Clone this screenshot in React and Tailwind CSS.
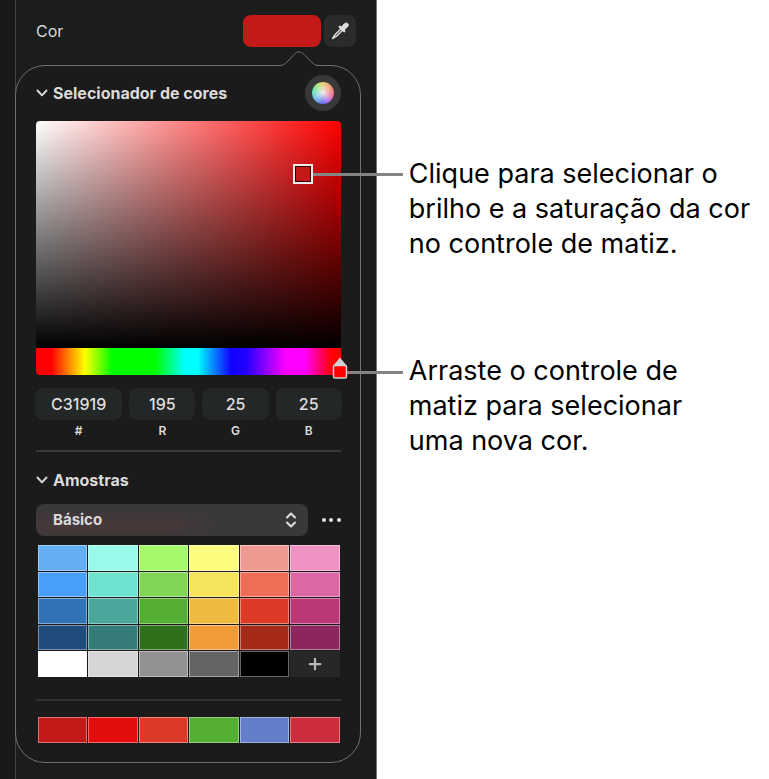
import clsx from 'clsx';
import { Plus } from 'lucide-react';

const swatches = [
  'bg-[#63adf2]', 'bg-[#9af9ea]', 'bg-[#a5f96b]', 'bg-[#fefc7e]', 'bg-[#ef9a91]', 'bg-[#ef94c2]',
  'bg-[#489ff8]', 'bg-[#6de2cf]', 'bg-[#82d557]', 'bg-[#f5e35b]', 'bg-[#ee6d57]', 'bg-[#dd66a4]',
  'bg-[#3273b5]', 'bg-[#4ba69b]', 'bg-[#54ae32]', 'bg-[#eebb40]', 'bg-[#da3a26]', 'bg-[#b93875]',
  'bg-[#1f4c7c]', 'bg-[#357b77]', 'bg-[#2f701d]', 'bg-[#f19b38]', 'bg-[#a52a1a]', 'bg-[#8c265e]',
  'bg-white', 'bg-[#d5d5d5]', 'bg-[#929292]', 'bg-[#646464]', 'bg-black',
];

const recents = [
  'bg-[#c31919]', 'bg-[#e40d0d]', 'bg-[#da3a26]', 'bg-[#54ae32]', 'bg-[#647fca]', 'bg-[#cb2d3c]',
];

const channels = [
  { id: 'hex', label: '#', value: 'C31919', grow: 'flex-[87]' },
  { id: 'red', label: 'R', value: '195', grow: 'flex-[66]' },
  { id: 'green', label: 'G', value: '25', grow: 'flex-[66]' },
  { id: 'blue', label: 'B', value: '25', grow: 'flex-[66]' },
];

function Swatch({ color }) {
  return <button type="button" aria-label="Amostra" className={clsx('border border-white/40', color)} />;
}

function SectionTitle({ children }) {
  return (
    <button type="button" className="flex items-center gap-[5px] text-base font-bold text-[#dadada]">
      <svg viewBox="0 0 12 8" className="h-2 w-3" fill="none" stroke="#dadada" strokeWidth="1.9" strokeLinecap="round" strokeLinejoin="round">
        <path d="M1.5 1.5 6 6.3 10.5 1.5" />
      </svg>
      {children}
    </button>
  );
}

function Eyedropper() {
  return (
    <svg viewBox="0 0 20 20" className="size-5" fill="none">
      <path d="M11.2 7.4 5.2 13.4C4.4 14.2 4.4 15 3.4 16.2L2.6 17.2 2.9 17.5 4 16.7C5.2 15.7 6 15.7 6.8 14.9L12.7 9" stroke="#dedede" strokeWidth="1.4" strokeLinejoin="round" />
      <path d="M9.8 5.8 14.2 10.2" stroke="#dedede" strokeWidth="2.4" strokeLinecap="round" />
      <path d="M11.3 6.2 14.2 3C15.4 1.7 17 1.8 17.8 2.7 18.6 3.6 18.5 5 17.3 6.1L14 8.9Z" fill="#dedede" stroke="#dedede" />
    </svg>
  );
}

function ColorField() {
  return (
    <div className="relative mt-[10px]">
      <div className="h-[227px] rounded-t-[4px] bg-[linear-gradient(to_top,#000,transparent),linear-gradient(to_right,#fff,#f00)]" />
      <div className="h-[27px] rounded-b-[4px] bg-[linear-gradient(to_right,#f00_5%,#ff0_16%,#0f0_25%,#0f0_39%,#0ff_49%,#0ff_53%,#10f_64%,#20f_69%,#f0f_82%,#f0f_88%,#f00_97%)]" />

      {/* brightness / saturation handle */}
      <div className="absolute top-[43px] right-[28px] size-5 border-2 border-[#ececec] bg-[#c31919] shadow-[inset_0_0_0_1px_#300]">
        <span className="absolute top-[7px] left-[18px] h-[3px] w-[90px] bg-[#848484]" />
      </div>

      {/* hue handle */}
      <div className="absolute top-[236px] -right-[7px]">
        <svg viewBox="0 0 16 22" className="h-[22px] w-4">
          <path d="M8 .5 15 9H1Z" fill="#cfcfcf" />
          <rect x="1.5" y="8.5" width="13" height="12.5" rx="1.5" fill="#f00" stroke="#cfcfcf" strokeWidth="1.5" />
        </svg>
        <span className="absolute top-[14px] left-[15px] h-[3px] w-14 bg-[#848484]" />
      </div>
    </div>
  );
}

function Popover() {
  return (
    <section className="relative mt-[18px] mr-[15px] -ml-px rounded-[30px] border border-[#707070] bg-[#1b1b1b] pt-[9px] pr-[19px] pb-[19px] pl-5">
      <svg viewBox="0 0 44 17" className="absolute -top-4 right-[39px] h-[17px] w-11">
        <path d="M2 15.5C6 15.5 8 14 10 12L17 4.5C20 1 24 1 27 4.5L34.5 12C36.5 14 38.5 15.5 42 15.5V17H2Z" fill="#1b1b1b" />
        <path d="M2 15.5C6 15.5 8 14 10 12L17 4.5C20 1 24 1 27 4.5L34.5 12C36.5 14 38.5 15.5 42 15.5" fill="none" stroke="#707070" />
      </svg>

      <div className="flex items-center justify-between">
        <SectionTitle>Selecionador de cores</SectionTitle>
        <button type="button" aria-label="Cores" className="flex size-9 items-center justify-center rounded-full bg-[#383838]">
          <span className="size-[22px] rounded-full bg-[radial-gradient(circle,#eee_0%,#eee8_35%,transparent_80%),conic-gradient(#efc45a,#f0705c_20%,#e8508f_30%,#a855e8_40%,#4c50f0_50%,#58c0ee_67%,#58e0a0_80%,#8ee860_90%,#efc45a)]" />
        </button>
      </div>

      <ColorField />

      <div className="-mx-px mt-[13px] flex gap-[7px]">
        {channels.map(({ id, label, value, grow }) => (
          <div key={id} className={clsx('flex min-w-0 flex-col', grow)}>
            <input
              id={id}
              defaultValue={value}
              className="h-8 w-full rounded-lg bg-[#232727] text-center text-base font-medium text-[#dfdfdf]"
            />
            <label htmlFor={id} className="mt-[3px] text-center text-[12px] leading-4 font-semibold text-[#dfdfdf]">{label}</label>
          </div>
        ))}
      </div>

      <hr className="mt-[11px] border-t-2 border-[#383838]" />

      <div className="mt-4">
        <SectionTitle>Amostras</SectionTitle>
      </div>

      <div className="mt-3 flex items-center gap-[14px]">
        <div className="relative flex-1">
          <select
            aria-label="Conjunto de amostras"
            className="h-8 w-full appearance-none rounded-lg bg-[linear-gradient(to_right,transparent_50%,#383838_70%),linear-gradient(#383838,#47383a_70%,#3c3838)] px-[17px] text-[15px] font-bold text-[#dadada]"
          >
            <option>Básico</option>
          </select>
          <svg viewBox="0 0 12 16" className="pointer-events-none absolute top-2 right-[11px] h-4 w-3" fill="none" stroke="#dfdfdf" strokeWidth="2" strokeLinecap="round" strokeLinejoin="round">
            <path d="M2 5.5 6 1.5 10 5.5M2 10.5 6 14.5 10 10.5" />
          </svg>
        </div>
        <button type="button" aria-label="Mais opções" className="flex w-[19px] justify-between">
          <span className="size-1 rounded-full bg-[#dfdfdf]" />
          <span className="size-1 rounded-full bg-[#dfdfdf]" />
          <span className="size-1 rounded-full bg-[#dfdfdf]" />
        </button>
      </div>

      <div className="mt-[9px] mr-px ml-0.5 grid h-[132px] grid-cols-6 grid-rows-5 gap-px">
        {swatches.map((color) => (
          <Swatch key={color} color={color} />
        ))}
        <button type="button" aria-label="Adicionar" className="flex items-center justify-center bg-[#272727] text-[#b8b8b8]">
          <Plus className="size-[18px]" strokeWidth={3} />
        </button>
      </div>

      <hr className="mt-[22px] border-t-2 border-[#323232]" />

      <div className="mt-4 mr-px ml-0.5 grid h-[26px] grid-cols-6 gap-px">
        {recents.map((color) => (
          <Swatch key={color} color={color} />
        ))}
      </div>
    </section>
  );
}

export default function App() {
  return (
    <div className="flex min-h-screen bg-white font-['Inter',sans-serif]">
      <aside className="w-[49%] shrink-0 border-r border-[#777] bg-[#191919] pl-[15px]">
        <div className="min-h-screen border-l border-[#444] bg-[#1b1c1c] pt-[15px]">
          <div className="flex items-center gap-[3px] pr-5 pl-5">
            <span className="flex-1 text-base text-[#d8d8d8]">Cor</span>
            <button type="button" aria-label="Cor" className="h-8 w-[78px] rounded-lg bg-[#c31919]" />
            <button type="button" aria-label="Conta-gotas" className="flex size-8 items-center justify-center rounded-lg bg-[#2a2b2b]">
              <Eyedropper />
            </button>
          </div>
          <Popover />
        </div>
      </aside>

      <main className="flex-1 pt-[156px] pl-8 text-[27px] leading-[35px] text-black">
        <p>
          Clique para selecionar o<br />
          brilho e a saturação da cor<br />
          no controle de matiz.
        </p>
        <p className="mt-[92px]">
          Arraste o controle de<br />
          matiz para selecionar<br />
          uma nova cor.
        </p>
      </main>
    </div>
  );
}
